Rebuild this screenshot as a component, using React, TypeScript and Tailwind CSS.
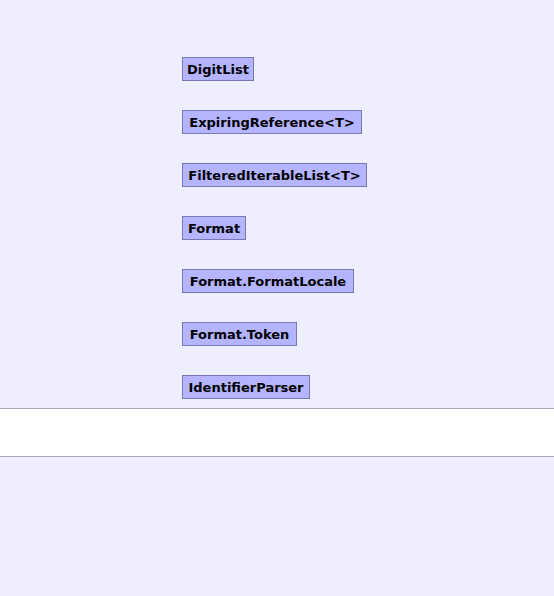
const items: { name: string; w: string }[] = [
  { name: 'DigitList', w: 'w-[72px]' },
  { name: 'ExpiringReference<T>', w: 'w-[180px]' },
  { name: 'FilteredIterableList<T>', w: 'w-[185px]' },
  { name: 'Format', w: 'w-[64px]' },
  { name: 'Format.FormatLocale', w: 'w-[172px]' },
  { name: 'Format.Token', w: 'w-[115px]' },
  { name: 'IdentifierParser', w: 'w-[128px]' },
]

export default function App() {
  return (
    <main
      className="w-[554px] h-[596px] bg-[#eeeeff] flex flex-col overflow-hidden"
      style={{ fontFamily: '"DejaVu Sans", sans-serif' }}
    >
      {/* class boxes */}
      <div className="flex flex-col gap-[29px] pt-[57px] pl-[182px]">
        {items.map((it) => (
          <div
            key={it.name}
            className={`${it.w} h-[24px] flex items-center justify-center bg-[#b4b4ff] border border-[#7878b4] text-[13px] font-bold text-black leading-none`}
          >
            {it.name}
          </div>
        ))}
      </div>

      {/* white band */}
      <div className="mt-[9px] h-[49px] bg-white border-y border-[#a8a8b8]" />
    </main>
  )
}
